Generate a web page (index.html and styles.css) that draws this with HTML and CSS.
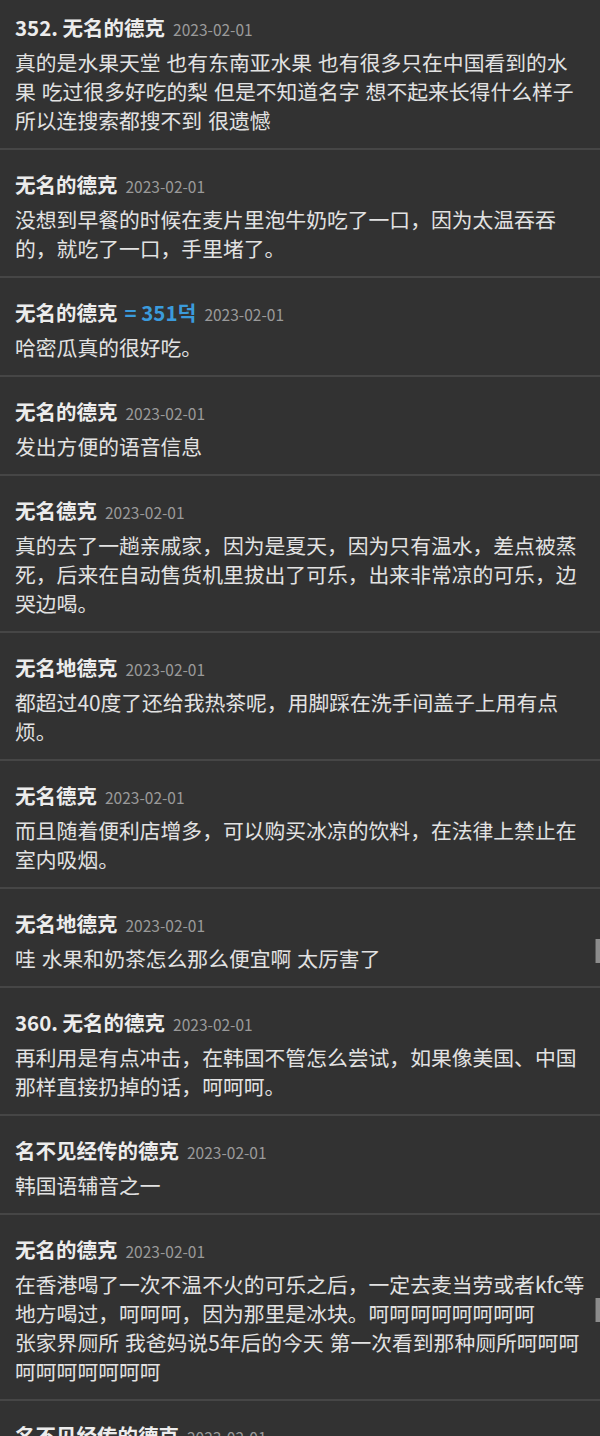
FILE: index.html
```html
<!DOCTYPE html>
<html lang="zh-CN">
<head>
<meta charset="utf-8">
<link rel="stylesheet" href="styles.css">
</head>
<body>
<div class="list">
  <div class="item">
    <div class="head"><span class="name">352. 无名的德克</span><span class="date">2023-02-01</span></div>
    <div class="text">真的是水果天堂 也有东南亚水果 也有很多只在中国看到的水果 吃过很多好吃的梨 但是不知道名字 想不起来长得什么样子所以连搜索都搜不到 很遗憾</div>
  </div>
  <div class="item">
    <div class="head"><span class="name">无名的德克</span><span class="date">2023-02-01</span></div>
    <div class="text">没想到早餐的时候在麦片里泡牛奶吃了一口，因为太温吞吞的，就吃了一口，手里堵了。</div>
  </div>
  <div class="item">
    <div class="head"><span class="name">无名的德克</span><span class="ref">= 351덕</span><span class="date">2023-02-01</span></div>
    <div class="text">哈密瓜真的很好吃。</div>
  </div>
  <div class="item">
    <div class="head"><span class="name">无名的德克</span><span class="date">2023-02-01</span></div>
    <div class="text">发出方便的语音信息</div>
  </div>
  <div class="item">
    <div class="head"><span class="name">无名德克</span><span class="date">2023-02-01</span></div>
    <div class="text">真的去了一趟亲戚家，因为是夏天，因为只有温水，差点被蒸死，后来在自动售货机里拔出了可乐，出来非常凉的可乐，边哭边喝。</div>
  </div>
  <div class="item">
    <div class="head"><span class="name">无名地德克</span><span class="date">2023-02-01</span></div>
    <div class="text">都超过40度了还给我热茶呢，用脚踩在洗手间盖子上用有点烦。</div>
  </div>
  <div class="item">
    <div class="head"><span class="name">无名德克</span><span class="date">2023-02-01</span></div>
    <div class="text">而且随着便利店增多，可以购买冰凉的饮料，在法律上禁止在室内吸烟。</div>
  </div>
  <div class="item">
    <div class="head"><span class="name">无名地德克</span><span class="date">2023-02-01</span></div>
    <div class="text">哇 水果和奶茶怎么那么便宜啊 太厉害了</div>
  </div>
  <div class="item">
    <div class="head"><span class="name">360. 无名的德克</span><span class="date">2023-02-01</span></div>
    <div class="text">再利用是有点冲击，在韩国不管怎么尝试，如果像美国、中国那样直接扔掉的话，呵呵呵。</div>
  </div>
  <div class="item">
    <div class="head"><span class="name">名不见经传的德克</span><span class="date">2023-02-01</span></div>
    <div class="text">韩国语辅音之一</div>
  </div>
  <div class="item">
    <div class="head"><span class="name">无名的德克</span><span class="date">2023-02-01</span></div>
    <div class="text">在香港喝了一次不温不火的可乐之后，一定去麦当劳或者kfc等地方喝过，呵呵呵，因为那里是冰块。呵呵呵呵呵呵呵呵<br>张家界厕所 我爸妈说5年后的今天 第一次看到那种厕所呵呵呵呵呵呵呵呵呵呵</div>
  </div>
  <div class="item">
    <div class="head"><span class="name">名不见经传的德克</span><span class="date">2023-02-01</span></div>
    <div class="text">韩国语辅音之一</div>
  </div>
</div>
<div class="thumb thumb-a"></div>
<div class="thumb thumb-b"></div>
</body>
</html>
```

FILE: styles.css
```css
html, body {
  margin: 0;
  padding: 0;
}
body {
  position: relative;
  width: 600px;
  height: 1436px;
  overflow: hidden;
  background: #323232;
  font-family: "Noto Sans CJK SC", "Noto Sans", sans-serif;
  color: #e2e2e2;
}
.list {
  margin-top: -7px;
}
.item {
  padding: 19px 15px 13px 15px;
  border-bottom: 2px solid #464646;
}
.head {
  height: 30px;
  line-height: 30px;
  margin-bottom: 6px;
  white-space: nowrap;
}
.name {
  font-size: 20.5px;
  font-weight: 700;
  color: #ececec;
}
.ref {
  font-size: 20.5px;
  font-weight: 700;
  color: #3b9bdc;
  margin-left: 7px;
}
.date {
  font-size: 15.5px;
  color: #9a9a9a;
  margin-left: 8px;
}
.text {
  font-size: 20.8px;
  line-height: 29px;
  word-spacing: 1.3px;
}
.thumb {
  position: absolute;
  right: 0;
  width: 5px;
  height: 24px;
  background: #8c8c8c;
  border-left: 1px solid #5c5c5c;
  box-sizing: border-box;
}
.thumb-a {
  top: 939px;
}
.thumb-b {
  top: 1298px;
}
```
